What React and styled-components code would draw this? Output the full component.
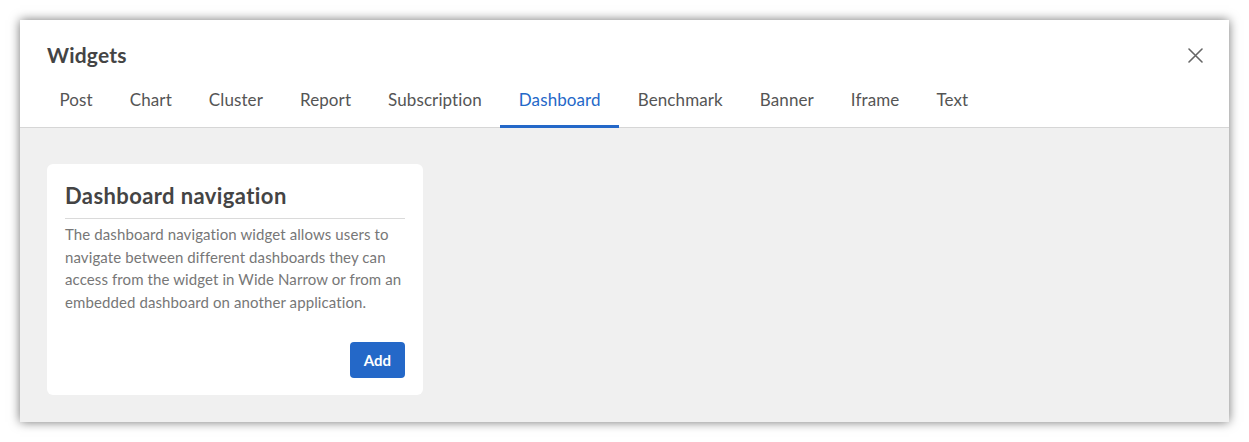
import React, { useState } from 'react';
import styled, { createGlobalStyle } from 'styled-components';

const GlobalStyle = createGlobalStyle`
  html, body {
    margin: 0;
    padding: 0;
    background: #ffffff;
    font-family: Lato, "Noto Sans", sans-serif;
  }
  * { box-sizing: border-box; }
`;

const Page = styled.div`
  padding: 20px;
  height: 442px;
`;

const Modal = styled.div`
  background: #f0f0f0;
  height: 402px;
  box-shadow: 0 0 10px rgba(0, 0, 0, 0.55);
  display: flex;
  flex-direction: column;
`;

const Header = styled.div`
  background: #fff;
  border-bottom: 1px solid #d6d6d6;
  padding: 22px 27px 0 21px;
`;

const TitleRow = styled.div`
  display: flex;
  justify-content: space-between;
  align-items: center;
  padding-left: 6px;
  margin-bottom: 15px;
`;

const Title = styled.h1`
  margin: 0;
  font-size: 21px;
  line-height: 26px;
  letter-spacing: 0.2px;
  font-weight: 700;
  color: #444;
`;

const CloseButton = styled.button`
  border: none;
  background: none;
  padding: 0;
  width: 16px;
  height: 16px;
  display: flex;
  align-items: center;
  justify-content: center;
  cursor: pointer;
  margin-right: -1px;
`;

const Tabs = styled.div`
  display: flex;
`;

const Tab = styled.button`
  border: none;
  background: none;
  font-family: inherit;
  font-size: 17px;
  line-height: 24px;
  letter-spacing: 0.1px;
  padding: 5px 18.5px 13px;
  margin-bottom: -1px;
  color: ${props => (props.active ? '#2468c8' : '#555')};
  border-bottom: 3px solid ${props => (props.active ? '#2468c8' : 'transparent')};
  cursor: pointer;
`;

const Body = styled.div`
  flex: 1;
  padding: 36px 27px 27px;
  display: flex;
  align-items: flex-start;
`;

const Card = styled.div`
  width: 376px;
  height: 231px;
  background: #fff;
  border-radius: 6px;
  padding: 17px 18px 17px;
  display: flex;
  flex-direction: column;
`;

const CardTitle = styled.h2`
  margin: 0;
  font-size: 22px;
  line-height: 30px;
  letter-spacing: 0.4px;
  font-weight: 700;
  color: #444;
  padding-bottom: 7px;
  border-bottom: 1px solid #dadada;
`;

const Description = styled.p`
  margin: 4px 0 0;
  font-size: 15px;
  line-height: 22.5px;
  letter-spacing: 0.1px;
  color: #777;
`;

const Actions = styled.div`
  margin-top: auto;
  display: flex;
  justify-content: flex-end;
`;

const AddButton = styled.button`
  background: #2468c8;
  color: #fff;
  border: none;
  border-radius: 4px;
  height: 36px;
  padding: 0 14px;
  font-family: inherit;
  font-size: 15px;
  font-weight: 700;
  cursor: pointer;
`;

const tabs = ['Post', 'Chart', 'Cluster', 'Report', 'Subscription', 'Dashboard', 'Benchmark', 'Banner', 'Iframe', 'Text'];

const App = () => {
  const [active, setActive] = useState('Dashboard');
  return (
    <>
      <GlobalStyle />
      <Page>
        <Modal>
          <Header>
            <TitleRow>
              <Title>Widgets</Title>
              <CloseButton aria-label="Close">
                <svg width="15" height="15" viewBox="0 0 15 15">
                  <path d="M1 1L14 14M14 1L1 14" stroke="#666" strokeWidth="1.6" strokeLinecap="round" />
                </svg>
              </CloseButton>
            </TitleRow>
            <Tabs>
              {tabs.map(tab => (
                <Tab key={tab} active={tab === active} onClick={() => setActive(tab)}>
                  {tab}
                </Tab>
              ))}
            </Tabs>
          </Header>
          <Body>
            <Card>
              <CardTitle>Dashboard navigation</CardTitle>
              <Description>
                The dashboard navigation widget allows users to navigate between different dashboards they can
                access from the widget in Wide Narrow or from an embedded dashboard on another application.
              </Description>
              <Actions>
                <AddButton>Add</AddButton>
              </Actions>
            </Card>
          </Body>
        </Modal>
      </Page>
    </>
  );
};

export default App;
